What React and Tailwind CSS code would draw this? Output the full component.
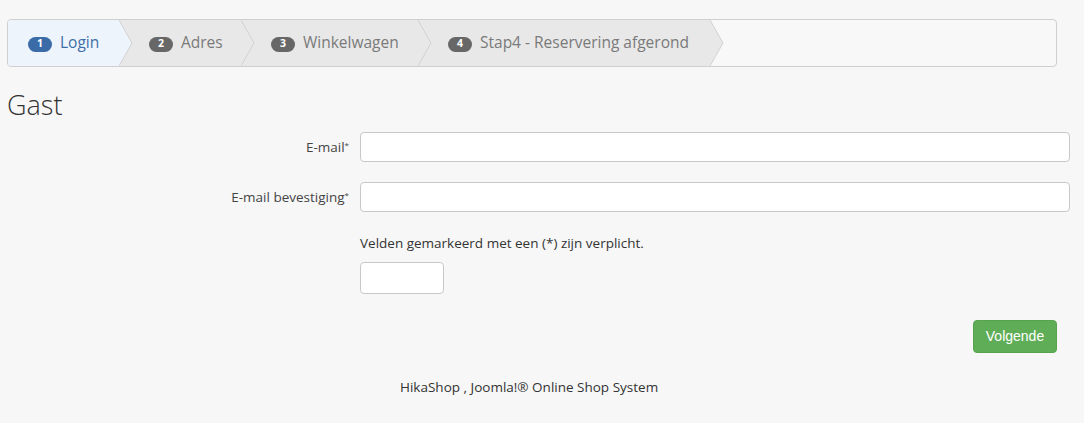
import React from "react";

const steps = [
  { n: 1, label: "Login", active: true, w: "w-[111px]", pl: "pl-[20px]" },
  { n: 2, label: "Adres", w: "w-[122px]", pl: "pl-[30px]" },
  { n: 3, label: "Winkelwagen", w: "w-[177px]", pl: "pl-[30px]" },
  { n: 4, label: "Stap4 - Reservering afgerond", w: "w-[292px]", pl: "pl-[30px]" },
];

function Chevron({ fill }) {
  return (
    <svg
      className="absolute left-full top-0 z-10 h-full w-[14px]"
      viewBox="0 0 14 46"
      preserveAspectRatio="none"
    >
      <polygon points="0,0 13,23 0,46" fill={fill} />
      <polyline points="0,0 13,23 0,46" fill="none" stroke="#d2d2d2" strokeWidth="1" />
    </svg>
  );
}

function Step({ n, label, active, w, pl }) {
  const bg = active ? "#eef4fc" : "#e8e8e8";
  return (
    <div
      className={`relative flex h-full shrink-0 items-center whitespace-nowrap ${w} ${pl} ${
        active ? "bg-[#eef4fc]" : "bg-[#e8e8e8]"
      }`}
    >
      <span
        className={`mr-[8px] mt-[2px] flex h-[15px] w-[24px] items-center justify-center rounded-full text-[10.5px] font-bold text-white ${
          active ? "bg-[#3b6ca7]" : "bg-[#676767]"
        }`}
      >
        {n}
      </span>
      <span className={`text-[15.5px] ${active ? "text-[#3d6fa6]" : "text-[#7a7a7a]"}`}>{label}</span>
      <Chevron fill={bg} />
    </div>
  );
}

function Field({ label }) {
  return (
    <div className="flex items-center">
      <label className="w-[360px] pr-[11px] text-right text-[13.5px] text-[#444]">
        {label}
        <sup className="text-[8px]">*</sup>
      </label>
      <input
        type="text"
        className="h-[30px] w-[710px] rounded-[4px] border border-[#c8c8c8] bg-white"
      />
    </div>
  );
}

export default function App() {
  return (
    <div
      className="min-h-[423px] bg-[#f7f7f7] pt-[19px] text-[#333]"
      style={{ fontFamily: '"Open Sans", "DejaVu Sans", sans-serif' }}
    >
      <div className="ml-[7px] flex h-[48px] w-[1050px] overflow-hidden rounded-[4px] border border-[#cfcfcf] bg-[#f8f8f8]">
        {steps.map((s) => (
          <Step key={s.n} {...s} />
        ))}
      </div>

      <h2 className="mt-[21px] pl-[7px] text-[27px] font-light leading-[34px] text-[#333]">Gast</h2>

      <div className="mt-[10px] flex flex-col gap-[20px]">
        <Field label="E-mail" />
        <Field label="E-mail bevestiging" />
      </div>

      <p className="mt-[21px] pl-[360px] text-[13.5px] text-[#333]">
        Velden gemarkeerd met een (*) zijn verplicht.
      </p>

      <div className="mt-[9px] pl-[360px]">
        <input
          type="text"
          className="h-[32px] w-[84px] rounded-[4px] border border-[#c8c8c8] bg-white"
        />
      </div>

      <div className="mt-[26px] flex w-[1057px] justify-end">
        <button
          className="h-[33px] w-[84px] rounded-[4px] border border-[#57a24f] bg-[#5fae57] text-[14px] text-white"
          style={{ fontFamily: '"Liberation Sans", Arial, sans-serif' }}
        >
          Volgende
        </button>
      </div>

      <p className="mt-[24px] pl-[400px] text-[13.5px] text-[#333]">
        HikaShop , Joomla!® Online Shop System
      </p>
    </div>
  );
}
